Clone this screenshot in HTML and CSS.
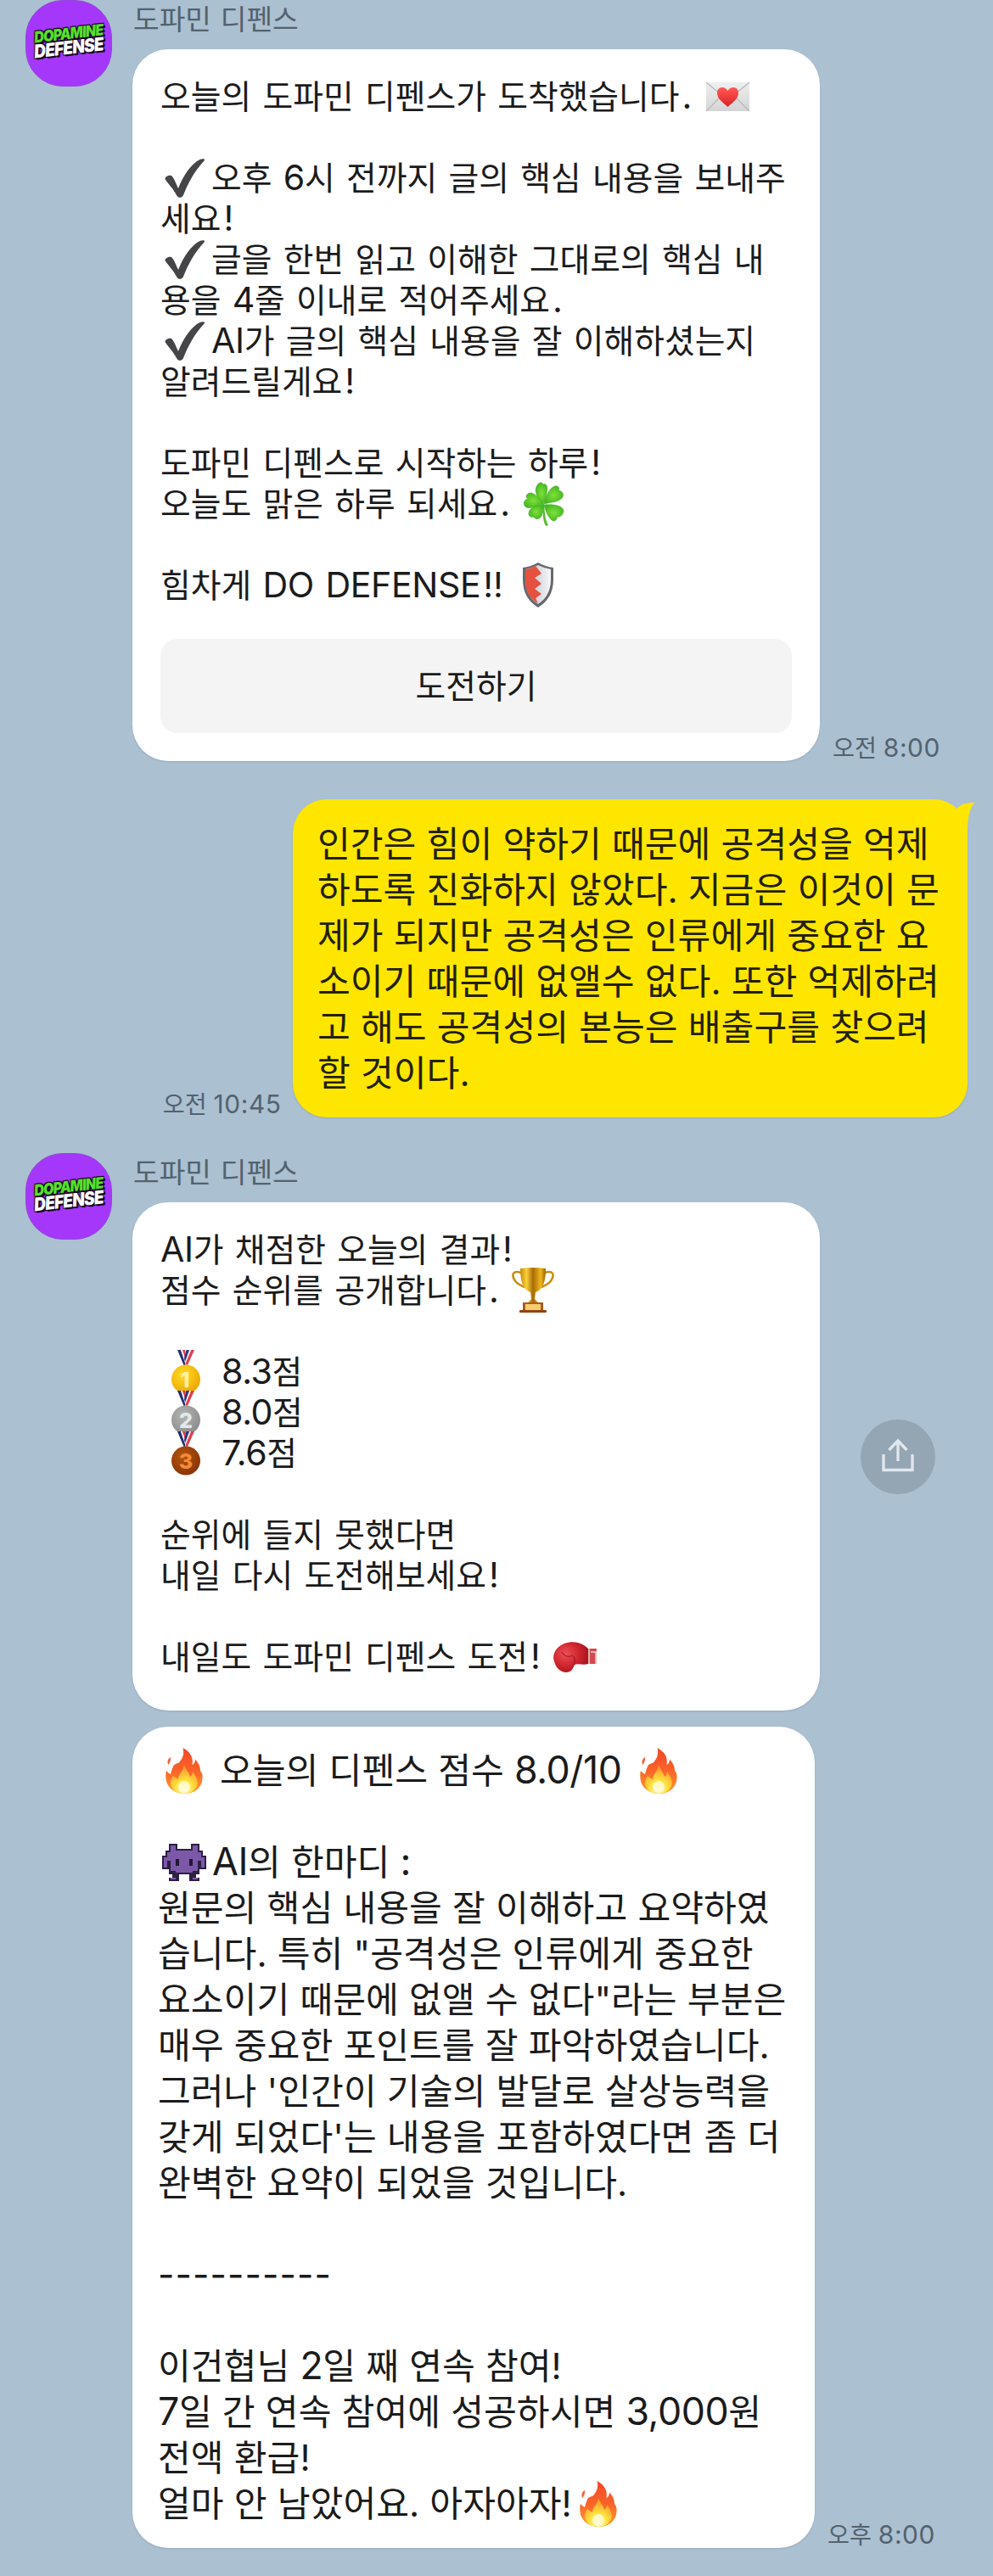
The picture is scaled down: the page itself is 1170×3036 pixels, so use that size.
FILE: index.html
```html
<!DOCTYPE html>
<html lang="ko">
<head>
<meta charset="utf-8">
<title>도파민 디펜스</title>
<link rel="stylesheet" href="styles.css">
</head>
<body>
<svg class="defs" width="0" height="0" aria-hidden="true">
  <defs>
    <linearGradient id="flameOuter" x1="0" y1="0" x2="0" y2="1"><stop offset="0" stop-color="#f2472c"/><stop offset=".5" stop-color="#fb6428"/><stop offset="1" stop-color="#ff9f2e"/></linearGradient>
    <radialGradient id="flameInner" cx=".5" cy=".85" r=".8"><stop offset="0" stop-color="#fffbd0"/><stop offset=".4" stop-color="#ffe33f"/><stop offset="1" stop-color="#ff942a"/></radialGradient>
    <linearGradient id="gold" x1="0" y1="0" x2="1" y2="0"><stop offset="0" stop-color="#c98a08"/><stop offset=".25" stop-color="#f8d23c"/><stop offset=".5" stop-color="#a86a05"/><stop offset=".8" stop-color="#f0b81c"/><stop offset="1" stop-color="#9c6004"/></linearGradient>
    <radialGradient id="medal1" cx=".4" cy=".35" r=".7"><stop offset="0" stop-color="#ffdc28"/><stop offset="1" stop-color="#eda400"/></radialGradient>
    <radialGradient id="medal2" cx=".4" cy=".35" r=".7"><stop offset="0" stop-color="#b5b5b5"/><stop offset="1" stop-color="#8a8a8a"/></radialGradient>
    <radialGradient id="medal3" cx=".4" cy=".35" r=".7"><stop offset="0" stop-color="#b4560f"/><stop offset="1" stop-color="#863204"/></radialGradient>
    <linearGradient id="silver" x1="0" y1="0" x2="1" y2="0"><stop offset="0" stop-color="#b4bac3"/><stop offset="1" stop-color="#f6f7f9"/></linearGradient>
    <radialGradient id="leaf" cx=".5" cy=".5" r=".6"><stop offset="0" stop-color="#7fe03a"/><stop offset="1" stop-color="#3fb51e"/></radialGradient>
    <radialGradient id="glove" cx=".35" cy=".4" r=".75"><stop offset="0" stop-color="#ee5158"/><stop offset=".5" stop-color="#d02630"/><stop offset="1" stop-color="#9c1119"/></radialGradient>
    <linearGradient id="heart" x1="0" y1="0" x2="0" y2="1"><stop offset="0" stop-color="#ff5a54"/><stop offset="1" stop-color="#dd1f24"/></linearGradient>
    <linearGradient id="paper" x1="0" y1="0" x2="0" y2="1"><stop offset="0" stop-color="#efefef"/><stop offset="1" stop-color="#d4d4d4"/></linearGradient>
    <symbol id="fire" viewBox="0 0 44 54">
      <path d="M20.500 0C30 5 33 12 31.500 20C34 19 35 16 35 13.500C40 19 41 23 41 27C43 29 44 32 43.500 36C43 47 34 54 22.500 54C10 54 1 46 .5 36C.3 33 0 30 1 27C3 29 4 30 6 31C7 27 8 24 9.500 21C11 18 15 19 17 16C21 11 22 6 20.500 0Z" fill="url(#flameOuter)"/>
      <path d="M6 11C6.500 15 5 17 3.500 20C1.500 17 2.500 13 6 11Z" fill="#f4613a"/>
      <path d="M22 20C24 26 28 29 29 34C31 33 32 30 32 28C37 35 39 40 37 45C34 51 29 54 22 54C13 54 6 49 6 42C6 38 7 35 9 33C11 35 13 36 15 37C15 31 21 28 22 20Z" fill="url(#flameInner)"/>
      <ellipse cx="22" cy="46" rx="7" ry="7" fill="#fffbd8" opacity=".8"/>
    </symbol>
    <symbol id="check" viewBox="0 0 48 46">
      <path d="M.5 24C0 21 7 18 9 21C12 25 14 31 16 35C22 20 31 6 42 .8C45 -.3 48.500 .2 46.500 2.500C35 15 28 28 22 43C20.500 46.500 16 47 14 43C10 35 5 31 .5 24Z" fill="#454547"/>
    </symbol>
    <symbol id="ribbon" viewBox="0 0 20 18">
      <path d="M0 0H4L9 14V18H7.500Z" fill="#22306f"/><path d="M4 0H6L10 12L9 15Z" fill="#fff"/><path d="M6 0H9L10 9V13Z" fill="#d63b4b"/>
      <path d="M20 0H16L9 17L12 18Z" fill="#e0404f"/><path d="M16 0H14L9 12V17Z" fill="#f4eef2"/><path d="M14 0H10.500L8 10L9 14Z" fill="#29357c"/>
    </symbol>
  </defs>
</svg>

<main class="chat">
  <section class="message message-in">
    <div class="avatar"><span class="logo-top">DOPAMINE</span><span class="logo-bottom">DEFENSE</span></div>
    <div class="thread">
      <div class="sender">도파민 디펜스</div>
      <div class="row">
        <article class="card">
          <div class="line"><span>오늘의 도파민 디펜스가 도착했습니다<b>.</b></span>
            <svg class="icon envelope" viewBox="0 0 51 34"><rect width="51" height="34" rx="1" fill="url(#paper)"/><path d="M0 34L19 15M51 34L32 15M0 0L22 18Q25.500 21 29 18L51 0" fill="none" stroke="#b9b9b9" stroke-width="1.200"/><path d="M25.500 29C20 24 12.500 19 13 12C13.500 5 22 4 25.500 10C29 4 37.500 5 38 12C38.500 19 31 24 25.500 29Z" fill="url(#heart)"/></svg></div>
          <div class="line"></div>
          <div class="line"><svg class="icon check"><use href="#check"/></svg><span>오후 <i>6</i>시 전까지 글의 핵심 내용을 보내주</span></div>
          <div class="line"><span>세요<b>!</b></span></div>
          <div class="line"><svg class="icon check"><use href="#check"/></svg><span>글을 한번 읽고 이해한 그대로의 핵심 내</span></div>
          <div class="line"><span>용을 <i>4</i>줄 이내로 적어주세요<b>.</b></span></div>
          <div class="line"><svg class="icon check"><use href="#check"/></svg><span><i>AI</i>가 글의 핵심 내용을 잘 이해하셨는지</span></div>
          <div class="line"><span>알려드릴게요<b>!</b></span></div>
          <div class="line"></div>
          <div class="line"><span>도파민 디펜스로 시작하는 하루<b>!</b></span></div>
          <div class="line"><span>오늘도 맑은 하루 되세요<b>.</b></span>
            <svg class="icon clover" viewBox="0 0 47 52"><path d="M24 26C25 36 25 44 29 51L26 52C22 45 23 35 22 26Z" fill="#58bb30"/><g fill="url(#leaf)" stroke="#3da822" stroke-width=".6"><path d="M23 26C15 19 12 9 16 4C18 0 22 0 23 3C27 1 29 7 27 13Q26 20 23 26Z"/><path d="M24 26C26 17 30 7 37 5C41 4 43 8 41 10C47 11 48 17 44 20C39 24 31 24 24 26Z"/><path d="M23 26C18 18 10 10 5 14C2 16 3 19 5 20C0 21 -1 26 2 29C6 33 15 28 23 26Z"/><path d="M23 27C14 27 6 31 6 37C6 41 9 42 12 41C14 45 19 44 21 40C23 36 23 31 23 27Z"/><path d="M24 27C26 35 30 44 35 46C38 46 40 43 39 41C44 42 47 37 47 34C46 28 36 26 24 27Z"/></g></svg></div>
          <div class="line"></div>
          <div class="line"><span>힘차게 <i>DO DEFENSE</i><b>!!</b></span>
            <svg class="icon shield" viewBox="0 0 36 53"><path d="M18 0Q27 5 36 6V20C36 36 29 46 18 53C7 46 0 36 0 20V6Q9 5 18 0Z" fill="#68696d"/><path d="M18 3Q26 7 33 8V20C33 34 27 43 18 49C9 43 3 34 3 20V8Q10 7 18 3Z" fill="url(#silver)"/><path d="M15 4L22 13L14 18L22 25L14 31L22 37L15 42L18 48C9 43 3 34 3 20V8Q10 7 15 4Z" fill="#e5503f"/></svg></div>
          <button class="action" type="button">도전하기</button>
        </article>
        <time class="time">오전 <i>8:00</i></time>
      </div>
    </div>
  </section>

  <section class="message message-out">
    <time class="time">오전 <i>10:45</i></time>
    <article class="bubble">
      <div class="line">인간은 힘이 약하기 때문에 공격성을 억제</div>
      <div class="line">하도록 진화하지 않았다. 지금은 이것이 문</div>
      <div class="line">제가 되지만 공격성은 인류에게 중요한 요</div>
      <div class="line">소이기 때문에 없앨수 없다. 또한 억제하려</div>
      <div class="line">고 해도 공격성의 본능은 배출구를 찾으려</div>
      <div class="line">할 것이다.</div>
      <svg class="tail" viewBox="0 0 28 40"><path d="M7 10C12 5.500 19 4 27.500 4C22 10 19 19 19 40H0Z" fill="#ffe600"/></svg>
    </article>
  </section>

  <section class="message message-in">
    <div class="avatar"><span class="logo-top">DOPAMINE</span><span class="logo-bottom">DEFENSE</span></div>
    <div class="thread">
      <div class="sender">도파민 디펜스</div>
      <div class="row row-share">
        <article class="card card-result">
          <div class="line"><span><i>AI</i>가 채점한 오늘의 결과<b>!</b></span></div>
          <div class="line"><span>점수 순위를 공개합니다<b>.</b></span>
            <svg class="icon trophy" viewBox="0 0 50 53"><path d="M11 6C3 3 0 7 2 12C4 18 9 20 15 23M39 6C47 3 50 7 48 12C46 18 41 20 35 23" fill="none" stroke="#c98d10" stroke-width="2.500"/><path d="M10 1Q25 -1 40 1C40 16 37 26 28 29L27 37L31 41H19L23 37L22 29C13 26 10 16 10 1Z" fill="url(#gold)"/><rect x="13" y="41" width="24" height="10" fill="#ad5b18"/><rect x="16" y="43" width="18" height="7" fill="#f3cd72"/><rect x="9" y="50" width="32" height="3" rx="1" fill="#93430f"/></svg></div>
          <div class="line"></div>
          <div class="line"><svg class="icon medal" viewBox="0 0 34 52"><use href="#ribbon" x="7" width="20" height="18"/><circle cx="17" cy="34.500" r="17" fill="url(#medal1)"/><text x="16" y="43.500" class="rank" fill="#fff0a0">1</text></svg><span><i>8.3</i>점</span></div>
          <div class="line"><svg class="icon medal" viewBox="0 0 34 52"><use href="#ribbon" x="7" width="20" height="18"/><circle cx="17" cy="34.500" r="17" fill="url(#medal2)"/><text x="17" y="43.500" class="rank" fill="#e2e8ea">2</text></svg><span><i>8.0</i>점</span></div>
          <div class="line"><svg class="icon medal" viewBox="0 0 34 52"><use href="#ribbon" x="7" width="20" height="18"/><circle cx="17" cy="34.500" r="17" fill="url(#medal3)"/><text x="17" y="43.500" class="rank" fill="#f58a35">3</text></svg><span><i>7.6</i>점</span></div>
          <div class="line"></div>
          <div class="line"><span>순위에 들지 못했다면</span></div>
          <div class="line"><span>내일 다시 도전해보세요<b>!</b></span></div>
          <div class="line"></div>
          <div class="line"><span>내일도 도파민 디펜스 도전<b>!</b></span>
            <svg class="icon glove" viewBox="0 0 52 36"><path d="M41 8L51 8Q50 17 51 26L41 26Z" fill="#cf4a50"/><path d="M42 8V26M44 12H50V26" fill="none" stroke="#f0d2d0" stroke-width="1.500"/><path d="M41 8C34 1 24 -2 13 2C3 6 -2 15 1 23C3 31 9 36 15 36C21 36 23 32 25 27C30 25 35 28 41 26Z" fill="url(#glove)"/><path d="M10 12Q15 20 23 16M24 27Q26 23 24 17" fill="none" stroke="#8b0d15" stroke-width="1.200" opacity=".7"/></svg></div>
        </article>
        <button class="share" type="button" aria-label="공유"><svg viewBox="0 0 40 40"><path d="M3 19V37.500H37V19M20 27V3M9.500 14L20 3L30.500 14" fill="none" stroke="currentColor" stroke-width="3.300"/></svg></button>
      </div>
      <div class="row">
        <article class="card card-score">
          <div class="line"><svg class="icon fire fire-lead"><use href="#fire"/></svg><span>오늘의 디펜스 점수 <i>8.0/10</i></span><svg class="icon fire fire-trail"><use href="#fire"/></svg></div>
          <div class="line"></div>
          <div class="line"><svg class="icon alien" viewBox="0 0 26 22" shape-rendering="crispEdges"><path d="M4 0H9V3H17V0H22V4H24V7H26V15H22V18H20V20H22V22H16V18H10V22H4V20H6V18H4V15H0V7H2V4H4Z" fill="#2c2140"/><path d="M5 1H8V4H18V1H21V5H23V8H25V14H23V10H21V16H18V17H8V16H5V10H3V14H1V8H3V5H5ZM5 20H8V21H5ZM18 20H21V21H18Z" fill="#7c58a9"/><path d="M8 9H10V13H8ZM16 9H18V13H16Z" fill="#211832"/></svg><span><i>AI</i>의 한마디 <i>:</i></span></div>
          <div class="line"><span>원문의 핵심 내용을 잘 이해하고 요약하였</span></div>
          <div class="line"><span>습니다. 특히 "공격성은 인류에게 중요한</span></div>
          <div class="line"><span>요소이기 때문에 없앨 수 없다"라는 부분은</span></div>
          <div class="line"><span>매우 중요한 포인트를 잘 파악하였습니다.</span></div>
          <div class="line"><span>그러나 '인간이 기술의 발달로 살상능력을</span></div>
          <div class="line"><span>갖게 되었다'는 내용을 포함하였다면 좀 더</span></div>
          <div class="line"><span>완벽한 요약이 되었을 것입니다.</span></div>
          <div class="line"></div>
          <div class="line"><span class="dashes">----------</span></div>
          <div class="line"></div>
          <div class="line"><span>이건협님 <i>2</i>일 째 연속 참여!</span></div>
          <div class="line"><span><i>7</i>일 간 연속 참여에 성공하시면 <i>3,000</i>원</span></div>
          <div class="line"><span>전액 환급!</span></div>
          <div class="line"><span>얼마 안 남았어요. 아자아자!</span><svg class="icon fire fire-end"><use href="#fire"/></svg></div>
        </article>
        <time class="time">오후 <i>8:00</i></time>
      </div>
    </div>
  </section>
</main>
</body>
</html>
```
FILE: styles.css
```css
* { box-sizing: border-box; }
body { margin: 0; background: #abc0d1; }
.defs { display: block; position: absolute; }
.chat {
  width: 1170px;
  height: 3036px;
  overflow: hidden;
  font-family: Inter, "Noto Sans CJK KR", sans-serif;
  color: #1b1b1b;
}
i { font-style: normal; font-size: 1.06em; line-height: 0; letter-spacing: -0.01em; }
b { font-weight: inherit; font-size: 1.06em; line-height: 0; margin-left: 3px; }
.message { display: flex; }
.message-in { padding-left: 30px; }
.avatar {
  width: 102px;
  height: 102px;
  flex: none;
  border-radius: 44px;
  background: #a537fb;
  border: 1px solid #9446d8;
  display: flex;
  flex-direction: column;
  align-items: center;
  padding-top: 29px;
}
.avatar span {
  font-family: Inter, sans-serif;
  font-weight: 900;
  font-style: italic;
  line-height: 18px;
  letter-spacing: -0.8px;
  transform: rotate(-6.5deg) scaleY(1.14);
  text-shadow: 1px 1px 0 #17091f, 2px 2px 0 #17091f, -1px -1px 0 #17091f, 1px -1px 0 #17091f, -1px 1px 0 #17091f;
}
.logo-top { font-size: 16px; color: #55e02a; }
.logo-bottom { font-size: 19px; color: #fff; }
.thread { margin-left: 24px; display: flex; flex-direction: column; }
.sender {
  height: 58px;
  padding-left: 1px;
  font-size: 33.3px;
  line-height: 46px;
  color: #53626e;
  word-spacing: 1.5px;
}
.row { display: flex; align-items: flex-end; gap: 15px; }
.card {
  width: 810px;
  padding: 31.5px 33px 33px 33px;
  border-radius: 42px;
  background: #fff;
  box-shadow: 0 1px 2px rgba(60, 80, 100, .2);
  font-size: 38.85px;
  word-spacing: 2.4px;
}
.line {
  height: 48px;
  line-height: 48px;
  display: flex;
  align-items: center;
  white-space: nowrap;
}
.icon { flex: none; display: block; overflow: visible; }
.action {
  display: block;
  width: 744px;
  height: 111px;
  margin-top: 39.5px;
  padding: 0 0 6px;
  border: 0;
  border-radius: 20px;
  background: #f4f4f4;
  color: inherit;
  font: inherit;
}
.time {
  font-size: 28.2px;
  line-height: 34px;
  color: #53626e;
  white-space: nowrap;
  margin-bottom: -2px;
}
.time i { letter-spacing: .6px; margin-right: -.6px; }
.message-out {
  margin-top: 45px;
  padding-right: 30px;
  justify-content: flex-end;
  align-items: flex-end;
  gap: 14px;
}
.bubble {
  position: relative;
  width: 795px;
  height: 375px;
  padding: 25.5px 29px;
  border-radius: 40px;
  background: #ffe600;
  box-shadow: 0 1px 2px rgba(60, 80, 100, .2);
  font-size: 42.2px;
  word-spacing: .3px;
  color: #241f05;
}
.bubble .line { height: 54px; line-height: 54px; display: block; }
.tail { position: absolute; right: -9px; top: 0; width: 28px; height: 40px; }
.message-out + .message-in { margin-top: 42px; }
.card-result { padding-bottom: 39.5px; }
.row-share { align-items: center; gap: 48px; margin-bottom: 19px; }
.share {
  width: 88px;
  height: 88px;
  padding: 0;
  border: 0;
  border-radius: 50%;
  background: #94a5b3;
  color: #e0e7ed;
  display: grid;
  place-items: center;
}
.share svg { width: 40px; height: 40px; margin-bottom: 3px; }
.card-score {
  width: 804px;
  padding: 24.5px 30px 25.5px;
  font-size: 42.2px;
  word-spacing: .3px;
}
.card-score .line { height: 54px; line-height: 54px; }
.dashes { letter-spacing: 1.1px; }
.envelope { width: 51px; height: 34px; margin-left: 17px; }
.check { width: 48px; height: 46px; margin: 0 7px 0 5px; }
.clover { width: 47px; height: 52px; margin-left: 16px; }
.shield { width: 36px; height: 53px; margin-left: 23px; }
.trophy { width: 50px; height: 53px; margin-left: 15px; }
.medal { width: 34px; height: 52px; margin: 0 25px 0 13px; position: relative; }
.rank { font-family: Inter, sans-serif; font-weight: 800; font-size: 25px; text-anchor: middle; }
.glove { width: 52px; height: 36px; margin-left: 15px; }
.fire { width: 44px; height: 54px; }
.fire-lead { margin: 0 20px 0 9px; }
.fire-trail { margin-left: 22px; }
.fire-end { margin-left: 9px; }
.alien { width: 52px; height: 44px; margin: 0 7px 0 5px; }
```
